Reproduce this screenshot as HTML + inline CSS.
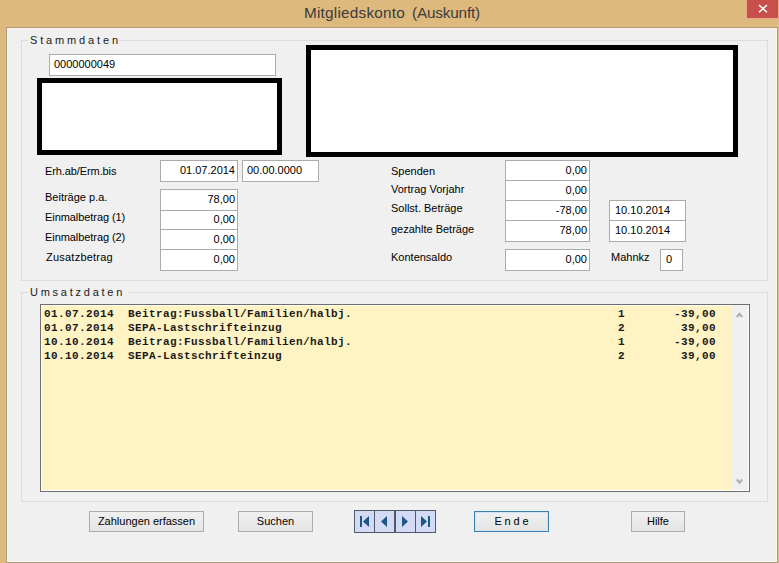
<!DOCTYPE html>
<html><head><meta charset="utf-8">
<style>
*{margin:0;padding:0;box-sizing:border-box}
html,body{width:779px;height:563px;overflow:hidden}
body{background:#DEB97D;position:relative;font-family:"Liberation Sans",sans-serif;font-size:11px;color:#000}
.a{position:absolute}
.frame{left:6px;top:27px;width:772px;height:536px;border:1px solid #B09D7C}
.hl{left:7px;top:28px;width:770px;height:534px;border:1px solid #FFF4EA;background:#F0F0F0}
.title{top:3px;font-size:15.3px;color:#3B3B3B;line-height:20px;white-space:pre}
.close{left:746px;top:0;width:33px;height:19px;background:#C84F4C;border:1px solid #F0AA8A;border-top:none}
.grp{border:1px solid #DCDCDC}
.lbl{white-space:pre;line-height:13px}
.gt{letter-spacing:2.85px;background:#F0F0F0;padding:0 0 0 2px;line-height:13px;color:#1a1a1a}
.tb{background:#fff;border:1px solid #ABABAB;line-height:13px;padding-top:3px}
.blk{background:#fff;border:5px solid #000}
.num{text-align:right;padding-right:2px}
.txt{padding-left:5px}
.btn{border:1px solid #ACACAC;background:linear-gradient(#F0F0F0,#E5E5E5);text-align:center;line-height:19px}
.mono{font-family:"Liberation Mono",monospace;font-weight:bold;font-size:11px;letter-spacing:0.4px;line-height:14px;white-space:pre;color:#1a1a1a}
</style></head><body>
<div class="a frame"></div>
<div class="a hl"></div>
<div class="a" style="left:778px;top:19px;width:1px;height:544px;background:#D5BE8F"></div>
<div class="a title" style="left:304px;width:auto;letter-spacing:0.23px">Mitgliedskonto</div><div class="a title" style="left:412px;width:auto;letter-spacing:-0.17px">(Auskunft)</div>
<div class="a close"><svg width="33" height="19" style="position:absolute;left:-1px;top:0"><path d="M13 5 L21 12.3 M21 5 L13 12.3" stroke="#fff" stroke-width="1.5"/></svg></div>

<!-- Stammdaten group -->
<div class="a grp" style="left:21px;top:40px;width:747px;height:241px"></div>
<div class="a gt" style="left:28px;top:34px;width:91px;white-space:nowrap">Stammdaten</div>
<div class="a tb txt" style="left:49px;top:54px;width:227px;height:22px;padding-left:4px">0000000049</div>
<div class="a blk" style="left:37px;top:78px;width:245px;height:77px"></div>
<div class="a blk" style="left:306px;top:45px;width:432px;height:112px"></div>

<div class="a lbl" style="left:45px;top:165px;letter-spacing:-0.1px">Erh.ab/Erm.bis</div>
<div class="a lbl" style="left:45px;top:191px">Beiträge p.a.</div>
<div class="a lbl" style="left:45px;top:211px;letter-spacing:-0.07px">Einmalbetrag (1)</div>
<div class="a lbl" style="left:45px;top:231px;letter-spacing:-0.07px">Einmalbetrag (2)</div>
<div class="a lbl" style="left:46px;top:251px;letter-spacing:0.23px">Zusatzbetrag</div>

<div class="a tb num" style="left:160px;top:160px;width:78px;height:22px">01.07.2014</div>
<div class="a tb txt" style="left:242px;top:160px;width:77px;height:22px;padding-left:4px">00.00.0000</div>

<div class="a tb num" style="left:160px;top:189px;width:78px;height:22px">78,00</div>
<div class="a tb num" style="left:160px;top:210px;width:78px;height:20px;padding-top:2px">0,00</div>
<div class="a tb num" style="left:160px;top:229px;width:78px;height:21px">0,00</div>
<div class="a tb num" style="left:160px;top:249px;width:78px;height:22px">0,00</div>

<div class="a lbl" style="left:391px;top:165px">Spenden</div>
<div class="a lbl" style="left:391px;top:183px">Vortrag Vorjahr</div>
<div class="a lbl" style="left:391px;top:202px">Sollst. Beträge</div>
<div class="a lbl" style="left:391px;top:223px">gezahlte Beträge</div>
<div class="a lbl" style="left:391px;top:251px">Kontensaldo</div>

<div class="a tb num" style="left:505px;top:160px;width:85px;height:21px">0,00</div>
<div class="a tb num" style="left:505px;top:180px;width:85px;height:21px">0,00</div>
<div class="a tb num" style="left:505px;top:200px;width:85px;height:21px">-78,00</div>
<div class="a tb num" style="left:505px;top:220px;width:85px;height:22px">78,00</div>
<div class="a tb num" style="left:505px;top:249px;width:85px;height:22px">0,00</div>

<div class="a tb txt" style="left:609px;top:200px;width:77px;height:21px">10.10.2014</div>
<div class="a tb txt" style="left:609px;top:220px;width:77px;height:22px">10.10.2014</div>
<div class="a lbl" style="left:611px;top:251px">Mahnkz</div>
<div class="a tb" style="left:660px;top:249px;width:23px;height:22px;padding-left:5px">0</div>

<!-- Umsatzdaten group -->
<div class="a grp" style="left:21px;top:292px;width:747px;height:210px"></div>
<div class="a gt" style="left:28px;top:286px;letter-spacing:2.75px;width:100px;white-space:nowrap">Umsatzdaten</div>
<div class="a" style="left:40px;top:304px;width:710px;height:188px;border:1px solid #6E6E6E;background:#FFF3C4;box-shadow:inset 1px 1px 0 #FFFDF2,inset -1px -1px 0 #fff"></div>
<div class="a" style="left:732px;top:305px;width:16px;height:185px;background:#F0F0F0"></div>
<svg class="a" style="left:732px;top:305px" width="17" height="186">
<path d="M4.8 12 L7.5 8.8 L10.2 12" fill="none" stroke="#AEAEAE" stroke-width="2.1"/>
<path d="M4.8 174.5 L7.5 177.7 L10.2 174.5" fill="none" stroke="#AEAEAE" stroke-width="2.1"/>
</svg>
<div class="a mono" style="left:44px;top:307px">01.07.2014  Beitrag:Fussball/Familien/halbj.
01.07.2014  SEPA-Lastschrifteinzug
10.10.2014  Beitrag:Fussball/Familien/halbj.
10.10.2014  SEPA-Lastschrifteinzug</div>
<div class="a mono" style="left:618px;top:307px">1
2
1
2</div>
<div class="a mono" style="left:674px;top:307px">-39,00
 39,00
-39,00
 39,00</div>

<!-- Buttons -->
<div class="a btn" style="left:89px;top:511px;width:115px;height:21px">Zahlungen erfassen</div>
<div class="a btn" style="left:238px;top:511px;width:75px;height:21px">Suchen</div>
<div class="a" style="left:354px;top:510px;width:82px;height:23px;background:#D3DAF6;border:1px solid #4E5A66"></div>
<div class="a" style="left:374px;top:511px;width:1px;height:21px;background:#4E5A66"></div>
<div class="a" style="left:394px;top:511px;width:2px;height:21px;background:#4E5A66"></div>
<div class="a" style="left:415px;top:511px;width:1px;height:21px;background:#4E5A66"></div>
<svg class="a" style="left:354px;top:510px" width="82" height="23">
<rect x="6" y="6" width="2" height="11" fill="#1C5884"/>
<path d="M9 11.5 L15 6 L15 17 Z" fill="#1C5884"/>
<path d="M27 11.5 L33 6 L33 17 Z" fill="#1C5884"/>
<path d="M54 11.5 L48 6 L48 17 Z" fill="#1C5884"/>
<path d="M73 11.5 L67 6 L67 17 Z" fill="#1C5884"/>
<rect x="74" y="6" width="2" height="11" fill="#1C5884"/>
</svg>
<div class="a btn" style="left:474px;top:511px;width:75px;height:21px;border-color:#3C7FB1;box-shadow:inset 0 0 0 1px #CDE6F7;letter-spacing:2.87px;padding-left:3px">Ende</div>
<div class="a btn" style="left:631px;top:511px;width:54px;height:21px">Hilfe</div>
</body></html>
